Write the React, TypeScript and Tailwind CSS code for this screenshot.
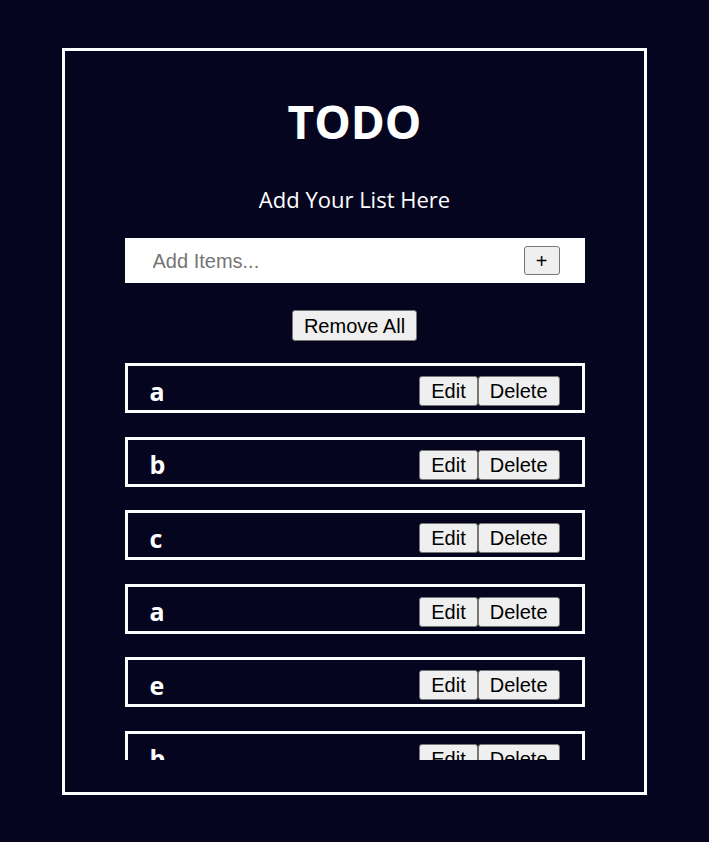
import { useState } from 'react';

const initialItems = ['a', 'b', 'c', 'a', 'e', 'b'];

const buttonClass =
  'bg-[#efefef] border border-[#767676] rounded-[3px] text-[20px] leading-[22px] text-black font-["Liberation_Sans",Arial,sans-serif]';

export default function App() {
  const [items, setItems] = useState<string[]>(initialItems);
  const [text, setText] = useState('');

  const addItem = () => {
    if (!text.trim()) return;
    setItems([...items, text]);
    setText('');
  };

  return (
    <div className="min-h-screen bg-[#060520] pt-[48px] pb-[47px] font-['Open_Sans',sans-serif]">
      <div className="mx-auto w-[585px] h-[747px] border-[3px] border-white flex flex-col items-center">
        <h1 className="mt-[35px] text-[46px] leading-[70px] font-bold text-white">TODO</h1>

        <p className="mt-[28px] text-[22px] leading-[30px] text-white">Add Your List Here</p>

        <div className="mt-[24px] w-[460px] h-[45px] bg-white flex items-center pl-[28px] pr-[25px]">
          <input
            value={text}
            onChange={(e) => setText(e.target.value)}
            placeholder="Add Items..."
            className="flex-1 outline-none bg-transparent text-[20px] text-black placeholder:text-[#757575] font-['Liberation_Sans',Arial,sans-serif]"
          />
          <button onClick={addItem} className={`${buttonClass} w-[36px] h-[29px] text-[17px]`}>
            +
          </button>
        </div>

        <button onClick={() => setItems([])} className={`${buttonClass} mt-[27px] h-[31px] px-[11px]`}>
          Remove All
        </button>

        <div className="mt-[22px] w-[460px] h-[397px] overflow-hidden flex flex-col gap-[23.5px]">
          {items.map((item, i) => (
            <div
              key={i}
              className="shrink-0 h-[50px] border-[3px] border-white flex items-center justify-between pl-[22px] pr-[22px] pt-[6px]"
            >
              <span className="text-[25px] font-bold text-white leading-none">{item}</span>
              <div className="flex">
                <button className={`${buttonClass} h-[30px] px-[11px]`}>Edit</button>
                <button
                  onClick={() => setItems(items.filter((_, j) => j !== i))}
                  className={`${buttonClass} h-[30px] px-[11px]`}
                >
                  Delete
                </button>
              </div>
            </div>
          ))}
        </div>
      </div>
    </div>
  );
}
